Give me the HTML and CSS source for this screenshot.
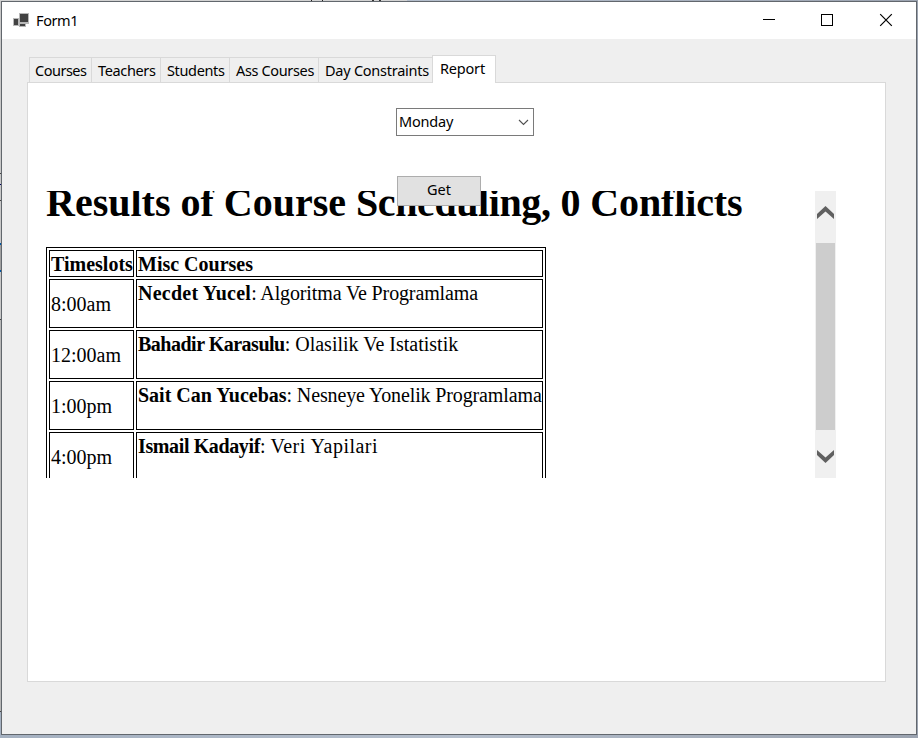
FILE: index.html
```html
<!DOCTYPE html>
<html lang="en">
<head>
<meta charset="utf-8">
<title>Form1</title>
<link rel="stylesheet" href="styles.css">
</head>
<body>
<div class="backdrop">
  <div class="top-strip"></div>
  <div class="left-strip"></div>
</div>
<main class="window">
  <header class="titlebar">
    <svg class="app-icon" width="16" height="16" viewBox="0 0 16 16">
      <path fill="#b8b8b8" d="M6 0h10v11h-3v3H6v-1H0V5h6z"/>
      <path fill="#424242" d="M7 1h8v8H7zM1 6h4v6H1zM7 11h5v2H7z"/>
    </svg>
    <span class="caption">Form1</span>
    <svg class="controls" width="132" height="14" viewBox="0 0 132 14" shape-rendering="crispEdges">
      <path fill="none" stroke="#000" d="M0 6.500h12M58.500 1.500h11v11h-11z"/>
      <path shape-rendering="auto" fill="none" stroke="#000" stroke-width="1.200" d="M117.200 1.200l11.600 11.600M128.800 1.200l-11.600 11.600"/>
    </svg>
  </header>
  <section class="client">
    <nav class="tabs">
      <span class="tab courses">Courses</span>
      <span class="tab teachers">Teachers</span>
      <span class="tab students">Students</span>
      <span class="tab ass">Ass Courses</span>
      <span class="tab constraints">Day Constraints</span>
      <span class="tab report active">Report</span>
    </nav>
    <div class="page">
      <div class="combo"><span>Monday</span>
        <svg width="11" height="7" viewBox="0 0 11 7"><path fill="none" stroke="#505050" stroke-width="1.100" d="M1 1l4.500 4.500L10 1"/></svg>
      </div>
      <button class="get">Get</button>
      <div class="browser">
        <div class="document">
          <h1>Results of Course <span class="tight">Scheduling,</span> <span class="snug">0 Conflicts</span></h1>
          <table>
            <tr class="head"><td class="time"><b>Timeslots</b></td><td><b>Misc Courses</b></td></tr>
            <tr><td class="time">8:00am</td><td class="entry"><b class="necdet">Necdet Yucel</b><span class="snug">: Algoritma Ve Programlama</span></td></tr>
            <tr><td class="time">12:00am</td><td class="entry"><b class="bahadir">Bahadir Karasulu</b>: Olasilik Ve Istatistik</td></tr>
            <tr><td class="time">1:00pm</td><td class="entry"><b>Sait Can Yucebas</b><span class="snug">: Nesneye Yonelik Programlama</span></td></tr>
            <tr><td class="time">4:00pm</td><td class="entry"><b class="ismail">Ismail Kadayif</b>: <span class="veri">Veri Yapilari</span></td></tr>
          </table>
        </div>
        <div class="scrollbar">
          <svg width="17" height="13" viewBox="0 0 17 13"><path fill="#606060" d="M0 8L8.500 0 17 8V13L8.500 5.500 0 13z"/></svg>
          <div class="thumb"></div>
          <svg width="17" height="13" viewBox="0 0 17 13"><path fill="#606060" d="M0 0l8.500 7.500L17 0v5L8.500 13 0 5z"/></svg>
        </div>
      </div>
    </div>
  </section>
</main>
</body>
</html>
```
FILE: styles.css
```css
* { box-sizing: border-box; }
body {
  margin: 0;
  width: 918px;
  height: 738px;
  overflow: hidden;
  position: relative;
  background: #a5adb9;
  font: 14.5px/20px "Noto Sans", "Open Sans", sans-serif;
  letter-spacing: -.35px;
  color: #000;
}
.backdrop { position: absolute; inset: 0; background: linear-gradient(90deg, #a5b1c1, #b4becc 50%, #9ba3b0); }
.top-strip { width: 407px; height: 1px; background: linear-gradient(90deg, #d2d2d2 311px, #222 311px 312px, #d2d2d2 312px 322px, #222 322px 323px, #d2d2d2 323px 372px, #333 372px 374px, #d2d2d2 374px 379px, #333 379px 381px, #d2d2d2 381px); }
.left-strip {
  width: 1px;
  height: 711px;
  background: linear-gradient(#c8c8c8 172px, #444 172px 173px, #c8c8c8 173px 183px, #000060 183px 184px, #c8c8c8 184px 199px, #444 199px 200px, #c8c8c8 200px 242px, #0057a5 242px 244px, #a0a0a0 244px 269px, #0057a5 269px 271px, #c8c8c8 271px 318px, #444 318px 319px, #b8b8b8 319px 710px, #444 710px);
}
.window {
  position: relative;
  width: 916px;
  height: 734px;
  margin: 1px;
  border: 1px solid #62676d;
  background: #efefef;
}
.titlebar { display: flex; align-items: center; height: 37px; padding: 0 21px 0 11px; background: #fff; }
.app-icon { margin: 0 7px 0 0; }
.caption { padding-bottom: 2px; letter-spacing: -.4px; }
.controls { margin: 0 0 1px auto; }
.client { padding: 16px 30px 0 25px; }
.tabs { display: flex; align-items: flex-end; height: 27px; padding-left: 2px; }
.tab { height: 25px; padding: 2px 0 0 6px; border: 1px solid #d9d9d9; border-width: 1px 0 0 1px; white-space: nowrap; }
.courses { width: 62px; padding-left: 5px; letter-spacing: -.5px; }
.teachers, .students { width: 69px; }
.ass { width: 89px; }
.constraints { width: 114px; letter-spacing: -.25px; }
.report { width: 64px; height: 28px; margin-bottom: -1px; padding-left: 7px; border-right-width: 1px; background: #fff; z-index: 1; letter-spacing: -.2px; }
.page { width: 859px; height: 600px; border: 1px solid #d9d9d9; background: #fff; padding-top: 25px; }
.combo { display: flex; align-items: center; justify-content: space-between; width: 138px; height: 28px; margin-left: 368px; padding: 0 4px 0 2px; border: 1px solid #7a7a7a; letter-spacing: -.2px; }
.combo span { padding-bottom: 2px; }
.get {
  display: block; position: relative; z-index: 1; width: 84px; height: 30px; margin: 40px 0 -15px 369px; padding: 0 0 4px;
  border: 1px solid #adadad; background: #e1e1e1; font: inherit; color: #000;
}
.browser { display: flex; justify-content: space-between; width: 790px; height: 287px; margin-left: 18px; overflow: hidden; font-family: "Liberation Serif", serif; letter-spacing: 0; }
.document { font-size: 20px; line-height: 23px; }
h1 { margin: -11px 0 21px; font-size: 40px; line-height: 46px; white-space: nowrap; }
.tight { letter-spacing: -.4px; }
.snug { letter-spacing: -.13px; }
.necdet { letter-spacing: .25px; }
.bahadir { letter-spacing: -.5px; }
.ismail { letter-spacing: -.38px; }
.veri { letter-spacing: .5px; }
table { width: 500px; table-layout: fixed; border: 1px solid #000; border-spacing: 2px; }
td { height: 49px; padding: 2px 1px 0; border: 1px solid #000; white-space: nowrap; }
.head td { height: 27px; }
.time { width: 85px; }
.entry { vertical-align: top; }
.scrollbar { display: flex; flex-direction: column; align-items: center; justify-content: space-between; width: 21px; padding: 15px 0; background: #f0f0f0; }
.thumb { width: 19px; height: 187px; margin-top: 4px; background: #cdcdcd; }
```
